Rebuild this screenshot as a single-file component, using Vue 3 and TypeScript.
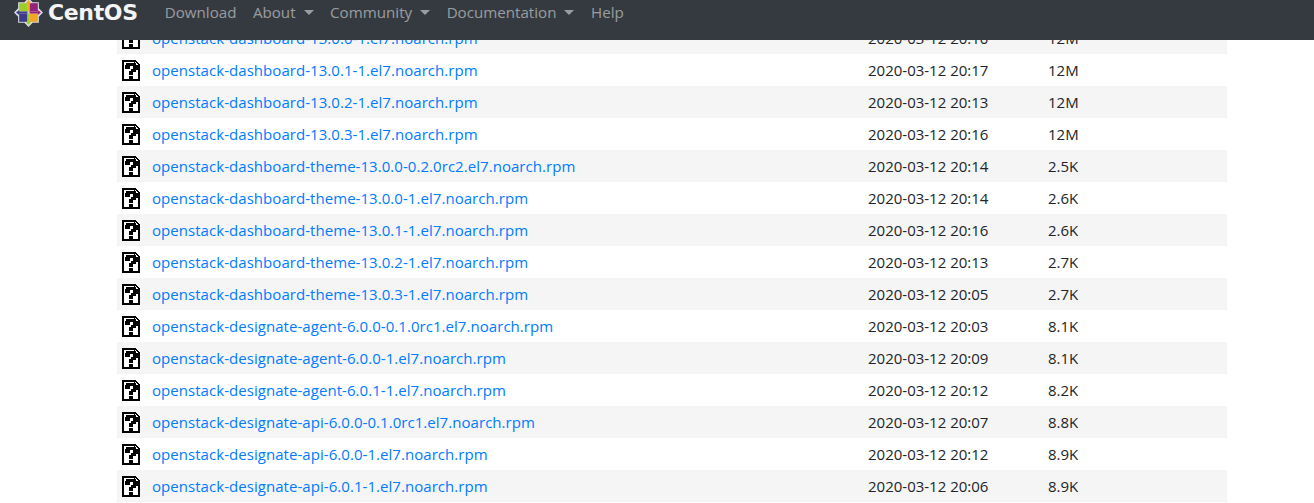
<script setup lang="ts">
interface Row { name: string; date: string; size: string }
const rows: Row[] = [
  { name: 'openstack-dashboard-13.0.0-1.el7.noarch.rpm', date: '2020-03-12 20:10', size: '12M' },
  { name: 'openstack-dashboard-13.0.1-1.el7.noarch.rpm', date: '2020-03-12 20:17', size: '12M' },
  { name: 'openstack-dashboard-13.0.2-1.el7.noarch.rpm', date: '2020-03-12 20:13', size: '12M' },
  { name: 'openstack-dashboard-13.0.3-1.el7.noarch.rpm', date: '2020-03-12 20:16', size: '12M' },
  { name: 'openstack-dashboard-theme-13.0.0-0.2.0rc2.el7.noarch.rpm', date: '2020-03-12 20:14', size: '2.5K' },
  { name: 'openstack-dashboard-theme-13.0.0-1.el7.noarch.rpm', date: '2020-03-12 20:14', size: '2.6K' },
  { name: 'openstack-dashboard-theme-13.0.1-1.el7.noarch.rpm', date: '2020-03-12 20:16', size: '2.6K' },
  { name: 'openstack-dashboard-theme-13.0.2-1.el7.noarch.rpm', date: '2020-03-12 20:13', size: '2.7K' },
  { name: 'openstack-dashboard-theme-13.0.3-1.el7.noarch.rpm', date: '2020-03-12 20:05', size: '2.7K' },
  { name: 'openstack-designate-agent-6.0.0-0.1.0rc1.el7.noarch.rpm', date: '2020-03-12 20:03', size: '8.1K' },
  { name: 'openstack-designate-agent-6.0.0-1.el7.noarch.rpm', date: '2020-03-12 20:09', size: '8.1K' },
  { name: 'openstack-designate-agent-6.0.1-1.el7.noarch.rpm', date: '2020-03-12 20:12', size: '8.2K' },
  { name: 'openstack-designate-api-6.0.0-0.1.0rc1.el7.noarch.rpm', date: '2020-03-12 20:07', size: '8.8K' },
  { name: 'openstack-designate-api-6.0.0-1.el7.noarch.rpm', date: '2020-03-12 20:12', size: '8.9K' },
  { name: 'openstack-designate-api-6.0.1-1.el7.noarch.rpm', date: '2020-03-12 20:06', size: '8.9K' },
]
const links = [
  { label: 'Download', caret: false },
  { label: 'About', caret: true },
  { label: 'Community', caret: true },
  { label: 'Documentation', caret: true },
  { label: 'Help', caret: false },
]
</script>

<template>
  <div class="page">
    <header class="nav">
      <div class="brand">
        <svg class="logo" width="29" height="29" viewBox="0 0 28 28">
          <path d="M14 0l4 4h6v6l4 4-4 4v6h-6l-4 4-4-4H4v-6l-4-4 4-4V4h6z" fill="#dcdce0" />
          <rect x="5" y="5" width="8" height="8" fill="#9ccd2a" />
          <rect x="15" y="5" width="8" height="8" fill="#932279" />
          <rect x="5" y="15" width="8" height="8" fill="#3d3a8c" />
          <rect x="15" y="15" width="8" height="8" fill="#efa724" />
          <path d="M14 2l2.500 3H15v8h-2V5h-1.500z" fill="#efa724" />
          <path d="M26 14l-3 2.500V15h-8v-2h8v-1.500z" fill="#932279" />
          <path d="M14 26l-2.500-3H13v-8h2v8h1.500z" fill="#9ccd2a" />
          <path d="M2 14l3-2.500V13h8v2H5v1.500z" fill="#3d3a8c" />
        </svg>
        <span class="word">CentOS</span>
      </div>
      <nav class="links">
        <a v-for="l in links" :key="l.label" class="link">
          {{ l.label }}<i v-if="l.caret" class="caret"></i>
        </a>
      </nav>
    </header>
    <main class="list">
      <div v-for="r in rows" :key="r.name" class="row">
        <svg class="file" width="18" height="21" viewBox="0 0 18 21" shape-rendering="crispEdges">
          <path d="M0 0h13l5 5v16H0z" fill="#000" />
          <path d="M2 2h10v4h4v13H2z" fill="#fff" />
          <path d="M13 2l3 3h-3z" fill="#fff" />
          <path d="M4 3h10v2h2v5h-2v2h-3v3H7v-4h2V9h2V6H8v3H3V5h1z" fill="#000" />
          <rect x="7" y="16" width="4" height="3" fill="#000" />
        </svg>
        <a class="name">{{ r.name }}</a>
        <span class="date">{{ r.date }}</span>
        <span class="size">{{ r.size }}</span>
      </div>
    </main>
  </div>
</template>

<style>
html, body { margin: 0; background: #fff; overflow: hidden; }
</style>

<style scoped>
.page {
  position: relative;
  height: 503px;
  overflow: hidden;
  font-family: "Open Sans", "Noto Sans", sans-serif;
  font-size: 15px;
  color: #212529;
}
.nav {
  position: absolute;
  inset: 0 0 auto 0;
  z-index: 2;
  height: 40px;
  background: #343a40;
  display: flex;
  align-items: flex-start;
}
.brand {
  display: flex;
  align-items: center;
  margin-left: 14px;
  height: 25px;
  gap: 5px;
}
.word {
  color: #f4f4f4;
  font-family: "DejaVu Sans", sans-serif;
  font-size: 22px;
  font-weight: 700;
  letter-spacing: -0.35px;
}
.links { display: flex; margin-left: 27px; font-size: 15.15px; }
.link {
  color: rgba(255, 255, 255, 0.5);
  height: 24px;
  line-height: 24px;
  margin-right: 16.500px;
  display: flex;
  align-items: center;
}
.caret {
  display: inline-block;
  margin-left: 8px;
  border-top: 5px solid rgba(255, 255, 255, 0.5);
  border-left: 5px solid transparent;
  border-right: 5px solid transparent;
}
.list {
  margin: 0 87px 0 117px;
  padding-top: 22px;
}
.row {
  height: 32px;
  display: flex;
  align-items: center;
}
.row:nth-child(odd) { background: #f5f5f5; }
.file { margin-left: 5px; flex: none; }
.name { margin-left: 12px; width: 716px; color: #007bff; white-space: nowrap; letter-spacing: 0.05px; }
.date { width: 180px; white-space: nowrap; }
.size { white-space: nowrap; }
</style>
